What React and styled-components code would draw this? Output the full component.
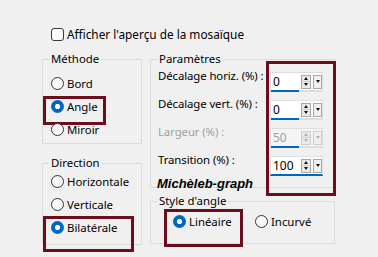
import styled, { createGlobalStyle, css } from 'styled-components';

const GlobalStyle = createGlobalStyle`
  body {
    margin: 0;
    background: #f0f0f0;
  }
  * {
    box-sizing: border-box;
  }
`;

const Dialog = styled.div`
  width: 378px;
  height: 257px;
  padding: 27px 0 0 42px;
  background: #f0f0f0;
  font-family: "Noto Sans", sans-serif;
  font-size: 11.4px;
  color: #000;
  white-space: nowrap;
`;

const CheckRow = styled.div`
  display: flex;
  align-items: center;
  gap: 3px;
  height: 14px;
  margin-left: 9px;
  line-height: 14px;
  font-size: 11.8px;
`;

const CheckBox = styled.span`
  width: 13px;
  height: 13px;
  border: 1px solid #3a3a3a;
  border-radius: 3px;
  background: #fbfbfb;
`;

const Columns = styled.div`
  display: flex;
  gap: 8px;
  margin-top: 11px;
`;

const Column = styled.div`
  display: flex;
  flex-direction: column;
  width: ${p => p.$w}px;
  gap: ${p => p.$gap}px;
`;

const Group = styled.fieldset`
  margin: 0;
  min-width: 0;
  border: 1px solid #dcdcdc;
  padding: ${p => p.$pt}px 6px ${p => p.$pb}px;
`;

const Legend = styled.legend`
  padding: 0 2px;
  line-height: 14px;
`;

const markBox = css`
  &::after {
    content: '';
    position: absolute;
    left: ${p => p.$mark[0]}px;
    top: ${p => p.$mark[1]}px;
    width: ${p => p.$mark[2]}px;
    height: ${p => p.$mark[3]}px;
    border: 3px solid #6c0d1d;
    pointer-events: none;
  }
`;

const RadioRow = styled.div`
  position: relative;
  display: flex;
  align-items: center;
  gap: 3px;
  height: 23px;
  width: ${p => (p.$w ? `${p.$w}px` : 'auto')};
  ${p => p.$mark && markBox}
`;

const Circle = styled.span`
  width: 13px;
  height: 13px;
  margin-left: 2px;
  border-radius: 50%;
  ${p =>
    p.$on
      ? css`
          background: radial-gradient(circle, #fff 0 2.4px, #0067c0 2.9px);
        `
      : css`
          border: 1px solid #333;
          background: #f8f8f8;
        `}
`;

const InlineRadios = styled.div`
  display: flex;
  padding-left: 14px;
`;

const ParamRows = styled.div`
  position: relative;
  ${p => p.$mark && markBox}
`;

const ParamRow = styled.div`
  display: grid;
  grid-template-columns: 113px auto;
  height: 28px;
  color: ${p => (p.$off ? '#a0a0a0' : '#000')};
`;

const Label = styled.span`
  padding-left: 1px;
  line-height: 14px;
  letter-spacing: -0.1px;
`;

const Spin = styled.div`
  display: flex;
  align-items: center;
  width: 53px;
  height: 20px;
  margin-top: 3px;
  background: ${p => (p.$off ? '#f4f4f4' : '#fff')};
  border: 1px solid #dedede;
  border-bottom: 2px solid ${p => (p.$focus ? '#0067c0' : '#dedede')};
`;

const Field = styled.span`
  align-self: stretch;
  display: flex;
  align-items: center;
  width: 28px;
  padding-left: 2px;
  border-bottom: 2px solid ${p => (p.$focus ? 'transparent' : '#0067c0')};
  margin-bottom: -2px;
  font-size: 12px;
`;

const Stepper = styled.span`
  display: flex;
  flex-direction: column;
  width: 10px;
  height: 14px;
  margin-left: 2px;
  border: 1px solid ${p => (p.$off ? '#cfcfcf' : '#a8a8a8')};
  background: #e9e9e9;
`;

const StepHalf = styled.span`
  flex: 1;
  display: flex;
  align-items: center;
  justify-content: center;
  & + & {
    border-top: 1px solid ${p => (p.$off ? '#cfcfcf' : '#a8a8a8')};
  }
`;

const DropButton = styled.span`
  display: flex;
  align-items: center;
  justify-content: center;
  width: 9px;
  height: 14px;
  margin-left: 2px;
  border: 1px solid ${p => (p.$off ? '#cfcfcf' : '#a8a8a8')};
  background: #efefef;
`;

const Arrow = styled.span`
  width: 0;
  height: 0;
  border-left: 2.5px solid transparent;
  border-right: 2.5px solid transparent;
  ${p =>
    p.$up
      ? css`border-bottom: 3px solid ${p.$off ? '#b0b0b0' : '#111'};`
      : css`border-top: 3px solid ${p.$off ? '#b0b0b0' : '#111'};`}
`;

const Watermark = styled.span`
  position: absolute;
  left: 0;
  top: 108px;
  line-height: 14px;
  font-family: "Liberation Sans", Arial, sans-serif;
  font-size: 13px;
  font-weight: bold;
  font-style: italic;
`;

function Radio({ label, on, mark, w }) {
  return (
    <RadioRow $mark={mark} $w={w}>
      <Circle $on={on} />
      <span>{label}</span>
    </RadioRow>
  );
}

function SpinField({ value, off, focus }) {
  return (
    <Spin $off={off} $focus={focus}>
      <Field $focus={focus}>{value}</Field>
      <Stepper $off={off}>
        <StepHalf $off={off}><Arrow $up $off={off} /></StepHalf>
        <StepHalf $off={off}><Arrow $off={off} /></StepHalf>
      </Stepper>
      <DropButton $off={off}><Arrow $off={off} /></DropButton>
    </Spin>
  );
}

const params = [
  { label: 'Décalage horiz. (%) :', value: '0' },
  { label: 'Décalage vert. (%) :', value: '0' },
  { label: 'Largeur (%) :', value: '50', off: true },
  { label: 'Transition (%) :', value: '100', focus: true },
];

export default function App() {
  return (
    <Dialog>
      <GlobalStyle />
      <CheckRow>
        <CheckBox />
        <span>Afficher l'aperçu de la mosaïque</span>
      </CheckRow>
      <Columns>
        <Column $w={100} $gap={12}>
          <Group $pt={6} $pb={2}>
            <Legend>Méthode</Legend>
            <Radio label="Bord" />
            <Radio label="Angle" on mark={[-6, 1, 57, 23]} />
            <Radio label="Miroir" />
          </Group>
          <Group $pt={0} $pb={5}>
            <Legend>Direction</Legend>
            <Radio label="Horizontale" />
            <Radio label="Verticale" />
            <Radio label="Bilatérale" on mark={[-6, 0, 85, 30]} />
          </Group>
        </Column>
        <Column $w={185} $gap={6}>
          <Group $pt={3} $pb={6}>
            <Legend>Paramètres</Legend>
            <ParamRows $mark={[109, -8, 64, 129]}>
              {params.map(p => (
                <ParamRow key={p.label} $off={p.off}>
                  <Label>{p.label}</Label>
                  <SpinField value={p.value} off={p.off} focus={p.focus} />
                </ParamRow>
              ))}
              <Watermark>Michèleb-graph</Watermark>
            </ParamRows>
          </Group>
          <Group $pt={2} $pb={10}>
            <Legend>Style d'angle</Legend>
            <InlineRadios>
              <Radio label="Linéaire" on w={82} mark={[-7, -1, 73, 32]} />
              <Radio label="Incurvé" />
            </InlineRadios>
          </Group>
        </Column>
      </Columns>
    </Dialog>
  );
}
